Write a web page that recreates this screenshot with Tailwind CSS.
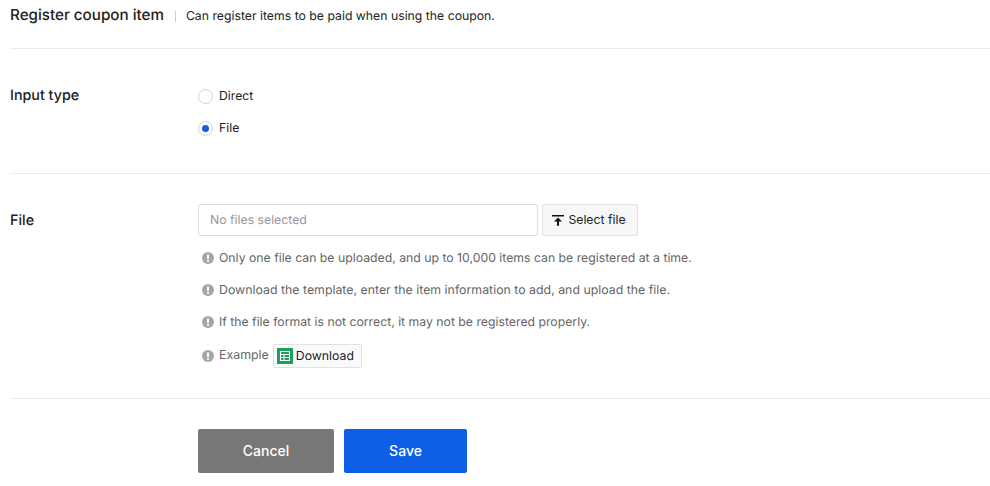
<!DOCTYPE html>
<html lang="en">
<head>
  <meta charset="UTF-8" />
  <title>Register coupon item</title>
  <script src="https://cdn.jsdelivr.net/npm/@tailwindcss/browser@4"></script>
</head>
<body class="bg-white font-['Inter',sans-serif] text-[#222] overflow-hidden [text-rendering:geometricPrecision]">
  <div class="w-[990px] h-[486px] pl-[10px]">

    <!-- Title -->
    <div class="h-[49px] border-b border-[#ebebeb] flex items-start pt-[5px]">
      <h2 class="text-[15.2px] leading-[20px] font-medium">Register coupon item</h2>
      <span class="w-px h-[11px] bg-[#ccc] ml-[11px] mr-[10px] mt-[6px]"></span>
      <p class="text-[12.25px] leading-[22px]">Can register items to be paid when using the coupon.</p>
    </div>

    <!-- Input type -->
    <div class="h-[125px] border-b border-[#ebebeb] flex pt-[38px]">
      <label class="w-[188px] text-[14.300px] leading-[18px] font-medium">Input type</label>
      <div class="flex flex-col gap-[12px] -mt-[1px]">
        <div class="flex items-center h-[20px] gap-[6px] text-[12.25px]">
          <span class="w-[15px] h-[15px] rounded-full border border-[#d4d4d4] bg-white"></span>
          <span>Direct</span>
        </div>
        <div class="flex items-center h-[20px] gap-[6px] text-[12.25px]">
          <span class="w-[15px] h-[15px] rounded-full border border-[#d4d4d4] bg-white flex items-center justify-center">
            <span class="w-[7px] h-[7px] rounded-full bg-[#0f5fe6]"></span>
          </span>
          <span>File</span>
        </div>
      </div>
    </div>

    <!-- File -->
    <div class="h-[225px] border-b border-[#ebebeb] flex pt-[30px]">
      <label class="w-[188px] text-[14.300px] leading-[34px] font-medium">File</label>
      <div>
        <div class="flex gap-[4px]">
          <div class="w-[340px] h-[32px] border border-[#dcdcdc] rounded-[2px] px-[11px] text-[12.25px] leading-[30px] text-[#999]">No files selected</div>
          <button class="w-[96px] h-[32px] border border-[#e2e2e2] rounded-[2px] bg-[#f7f7f7] flex items-center justify-center gap-[4px] pr-[2px] text-[12.25px]">
            <svg width="12" height="12" viewBox="0 0 12 12"><path d="M0 1h12v1.400H0zM6 3.600l4 4H7v4.200H5V7.600H2z" fill="#111"/></svg>
            Select file
          </button>
        </div>
        <ul class="mt-[6px] text-[12.25px] text-[#666]">
          <li class="flex items-center h-[32px] gap-[5px]">
            <svg class="ml-[4px]" width="12" height="12" viewBox="0 0 12 12"><circle cx="6" cy="6" r="6" fill="#a6a6a6"/><rect x="5" y="2.500" width="2" height="4.500" fill="#fff"/><rect x="5" y="8" width="2" height="1.700" fill="#fff"/></svg>
            Only one file can be uploaded, and up to 10,000 items can be registered at a time.
          </li>
          <li class="flex items-center h-[32px] gap-[5px] text-[12.350px]">
            <svg class="ml-[4px]" width="12" height="12" viewBox="0 0 12 12"><circle cx="6" cy="6" r="6" fill="#a6a6a6"/><rect x="5" y="2.500" width="2" height="4.500" fill="#fff"/><rect x="5" y="8" width="2" height="1.700" fill="#fff"/></svg>
            Download the template, enter the item information to add, and upload the file.
          </li>
          <li class="flex items-center h-[32px] gap-[5px]">
            <svg class="ml-[4px]" width="12" height="12" viewBox="0 0 12 12"><circle cx="6" cy="6" r="6" fill="#a6a6a6"/><rect x="5" y="2.500" width="2" height="4.500" fill="#fff"/><rect x="5" y="8" width="2" height="1.700" fill="#fff"/></svg>
            If the file format is not correct, it may not be registered properly.
          </li>
          <li class="flex items-center h-[36px] gap-[5px]">
            <svg class="ml-[4px]" width="12" height="12" viewBox="0 0 12 12"><circle cx="6" cy="6" r="6" fill="#a6a6a6"/><rect x="5" y="2.500" width="2" height="4.500" fill="#fff"/><rect x="5" y="8" width="2" height="1.700" fill="#fff"/></svg>
            <span class="-mt-[2px] text-[12.400px]">Example</span>
            <span class="ml-[-1px] w-[89px] h-[24px] border border-[#e2e2e2] rounded-[2px] bg-[#fafafa] flex items-center pl-[3px] gap-[3px] text-[#222]">
              <svg width="16" height="16" viewBox="0 0 16 16"><rect width="16" height="16" fill="#1a9f5c"/><path d="M3.500 3.500h9v9h-9zM3.500 6.500h9M3.500 9.500h9M7 6.500v6" fill="none" stroke="#fff" stroke-width="1.100"/></svg>
              Download
            </span>
          </li>
        </ul>
      </div>
    </div>

    <!-- Buttons -->
    <div class="flex gap-[10px] pt-[30px] pl-[188px]">
      <button class="w-[136px] h-[44px] pb-[2px] rounded-[2px] bg-[#777] text-white text-[14px] font-medium">Cancel</button>
      <button class="w-[123px] h-[44px] pb-[2px] rounded-[2px] bg-[#0f5fe6] text-white text-[14px] font-medium">Save</button>
    </div>
  </div>
</body>
</html>
